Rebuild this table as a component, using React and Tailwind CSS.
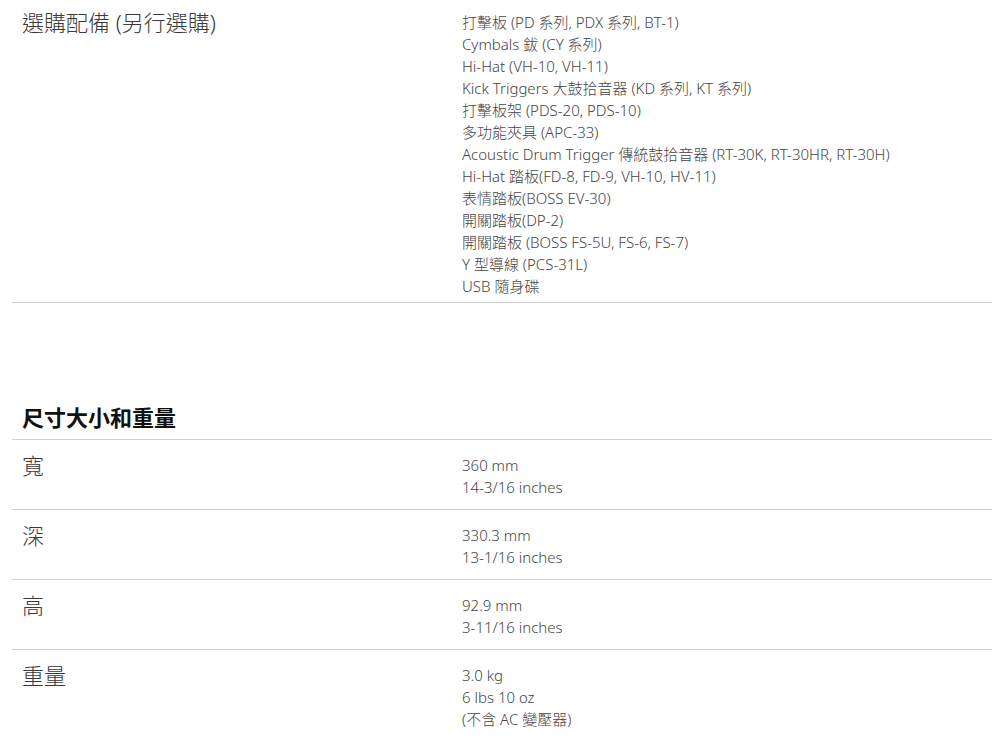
import React from 'react';

const accessories = [
  '打擊板 (PD 系列, PDX 系列, BT-1)',
  'Cymbals 鈸 (CY 系列)',
  'Hi-Hat (VH-10, VH-11)',
  'Kick Triggers 大鼓拾音器 (KD 系列, KT 系列)',
  '打擊板架 (PDS-20, PDS-10)',
  '多功能夾具 (APC-33)',
  'Acoustic Drum Trigger 傳統鼓拾音器 (RT-30K, RT-30HR, RT-30H)',
  'Hi-Hat 踏板(FD-8, FD-9, VH-10, HV-11)',
  '表情踏板(BOSS EV-30)',
  '開關踏板(DP-2)',
  '開關踏板 (BOSS FS-5U, FS-6, FS-7)',
  'Y 型導線 (PCS-31L)',
  'USB 隨身碟',
];

const dimensions = [
  { label: '寬', values: ['360 mm', '14-3/16 inches'] },
  { label: '深', values: ['330.3 mm', '13-1/16 inches'] },
  { label: '高', values: ['92.9 mm', '3-11/16 inches'] },
  { label: '重量', values: ['3.0 kg', '6 lbs 10 oz', '(不含 AC 變壓器)'] },
];

const SpecRow = ({ label, values, className }) => (
  <div className={`flex border-b border-[#cfcfcf] ${className}`}>
    <div className="w-[440px] shrink-0 px-[10px] text-[22px] leading-[22px] font-light text-[#3a3a3a]">{label}</div>
    <div className="flex-1 px-[10px] text-[15px] leading-[22px] font-light text-[#454545]">
      {values.map((v) => (
        <div key={v}>{v}</div>
      ))}
    </div>
  </div>
);

export default function App() {
  return (
    <div
      className="min-h-screen bg-white px-[12px] pr-[13px]"
      style={{ fontFamily: '"Noto Sans", "Noto Sans CJK TC", sans-serif' }}
    >
      <SpecRow label="選購配備 (另行選購)" values={accessories} className="pt-[11px] pb-[5px]" />

      <h2 className="mt-[100px] px-[10px] pb-[8px] text-[22px] leading-[28px] font-bold text-[#111] border-b border-[#cfcfcf]">
        尺寸大小和重量
      </h2>

      {dimensions.map((d) => (
        <SpecRow key={d.label} label={d.label} values={d.values} className="pt-[14px] pb-[11px]" />
      ))}
    </div>
  );
}
